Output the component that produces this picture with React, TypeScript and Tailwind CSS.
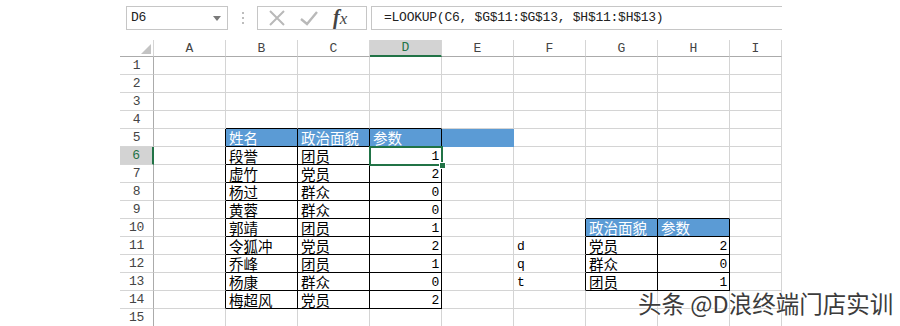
import React from "react";

const COLS = ["A", "B", "C", "D", "E", "F", "G", "H", "I"];
const ROWS = Array.from({ length: 15 }, (_, i) => i + 1);

type Cell = { t: string; k: "cjk" | "num" | "lat"; w?: boolean };

const DATA: Record<string, Cell> = {
  B5: { t: "姓名", k: "cjk", w: true },
  C5: { t: "政治面貌", k: "cjk", w: true },
  D5: { t: "参数", k: "cjk", w: true },
  G10: { t: "政治面貌", k: "cjk", w: true },
  H10: { t: "参数", k: "cjk", w: true },
  F11: { t: "d", k: "lat" },
  F12: { t: "q", k: "lat" },
  F13: { t: "t", k: "lat" },
  G11: { t: "党员", k: "cjk" },
  G12: { t: "群众", k: "cjk" },
  G13: { t: "团员", k: "cjk" },
  H11: { t: "2", k: "num" },
  H12: { t: "0", k: "num" },
  H13: { t: "1", k: "num" },
};

const T1: [string, string, string][] = [
  ["段誉", "团员", "1"],
  ["虚竹", "党员", "2"],
  ["杨过", "群众", "0"],
  ["黄蓉", "群众", "0"],
  ["郭靖", "团员", "1"],
  ["令狐冲", "党员", "2"],
  ["乔峰", "团员", "1"],
  ["杨康", "群众", "0"],
  ["梅超风", "党员", "2"],
];
T1.forEach(([a, b, c], i) => {
  const r = i + 6;
  DATA["B" + r] = { t: a, k: "cjk" };
  DATA["C" + r] = { t: b, k: "cjk" };
  DATA["D" + r] = { t: c, k: "num" };
});

function inTable(c: number, r: number) {
  if (c >= 1 && c <= 3 && r >= 5 && r <= 14) return true;
  if (c >= 6 && c <= 7 && r >= 10 && r <= 13) return true;
  return false;
}
function filled(c: number, r: number) {
  if (r === 5 && c >= 1 && c <= 4) return true;
  if (r === 10 && c >= 6 && c <= 7) return true;
  return false;
}

const CJK = "font-['Noto_Sans_CJK_SC',sans-serif]";
const MONO = "font-['Liberation_Mono','Noto_Sans_CJK_SC',monospace]";

function GridCell({ c, r }: { c: number; r: number }) {
  const key = COLS[c] + r;
  const d = DATA[key];
  const isFill = filled(c, r);
  const rightBlack = inTable(c, r) || inTable(c + 1, r);
  const bottomBlack = inTable(c, r) || inTable(c, r + 1);
  const rc = rightBlack ? "#000000" : isFill ? "#5b9bd5" : "#d4d4d4";
  const bc = bottomBlack ? "#000000" : isFill ? "#5b9bd5" : "#d4d4d4";
  const selected = key === "D6";
  return (
    <div
      className={`relative flex h-[18px] items-end border-r border-b ${
        isFill ? "bg-[#5b9bd5]" : "bg-white"
      } ${d && d.k === "num" ? "justify-end pr-[2px]" : "justify-start pl-[3px]"}`}
      style={{ borderRightColor: rc, borderBottomColor: bc }}
    >
      {d && (
        <span
          className={`whitespace-nowrap ${
            d.k === "cjk"
              ? `${CJK} text-[14.5px] leading-[16px]`
              : `${MONO} text-[13px] leading-[15px] tracking-[-0.4px]`
          } ${d.w ? "text-white" : "text-black"}`}
        >
          {d.t}
        </span>
      )}
      {selected && (
        <>
          <div className="pointer-events-none absolute left-[-1px] top-[-1px] z-10 h-[20px] w-[74px] border-2 border-[#217346]" />
          <div className="absolute left-[69px] top-[15px] z-20 h-[7px] w-[7px] border border-white bg-[#217346]" />
        </>
      )}
    </div>
  );
}

function XIcon() {
  return (
    <svg width="20" height="16" viewBox="0 0 20 16">
      <path d="M3 1 L17 15 M17 1 L3 15" stroke="#b9b9b9" strokeWidth="2" fill="none" />
    </svg>
  );
}
function CheckIcon() {
  return (
    <svg width="20" height="16" viewBox="0 0 20 16">
      <path d="M2 9 L8 14 L18 2" stroke="#b9b9b9" strokeWidth="2.4" fill="none" />
    </svg>
  );
}

export default function App() {
  return (
    <div className="relative h-[326px] w-[900px] overflow-hidden bg-white">
      <div className="relative ml-[120px] w-[662px]">
        {/* formula bar */}
        <div className="flex h-[40px] items-start pt-[6px]">
          <div className="ml-[6px] flex h-[24px] w-[102px] items-center justify-between border border-[#c6c6c6] pl-[4px] pr-[6px]">
            <span className={`${MONO} text-[13px] tracking-[-0.4px] text-[#222]`}>D6</span>
            <svg width="8" height="5" viewBox="0 0 8 5">
              <path d="M0 0 L8 0 L4 5 Z" fill="#7a7a7a" />
            </svg>
          </div>
          <div className="ml-[13px] flex h-[24px] w-[3px] flex-col items-center justify-center gap-[3px]">
            <div className="h-[2px] w-[2px] bg-[#bdbdbd]" />
            <div className="h-[2px] w-[2px] bg-[#bdbdbd]" />
            <div className="h-[2px] w-[2px] bg-[#bdbdbd]" />
          </div>
          <div className="ml-[13px] flex h-[24px] w-[110px] items-center border border-[#c6c6c6] pl-[9px]">
            <XIcon />
            <div className="ml-[12px]">
              <CheckIcon />
            </div>
            <span className="ml-[14px] font-['Liberation_Serif',serif] text-[20px] italic leading-[20px] text-[#444]">
              <span className="font-bold">f</span>
              <span className="text-[17px]">x</span>
            </span>
          </div>
          <div className="ml-[4px] flex h-[24px] flex-1 items-center border-y border-l border-[#c6c6c6] pl-[12px]">
            <span className={`${MONO} whitespace-nowrap text-[13px] tracking-[-0.25px] text-[#222]`}>
              =LOOKUP(C6, $G$11:$G$13, $H$11:$H$13)
            </span>
          </div>
        </div>

        {/* sheet */}
        <div className="grid grid-cols-[34px_repeat(8,72px)_52px]">
          <div className="relative h-[17px] border-r border-b border-r-[#d5d5d5] border-b-[#ababab]">
            <svg className="absolute right-[2px] bottom-[2px]" width="10" height="10" viewBox="0 0 10 10">
              <path d="M10 0 L10 10 L0 10 Z" fill="#c3c3c3" />
            </svg>
          </div>
          {COLS.map((c) => {
            const sel = c === "D";
            return (
              <div
                key={c}
                className={`flex h-[17px] items-center justify-center ${
                  sel
                    ? "border-b-2 border-r border-b-[#217346] border-r-[#d5d5d5] bg-[#d3d3d3] text-[#217346]"
                    : "border-r border-b border-r-[#d5d5d5] border-b-[#ababab] text-[#444]"
                } ${MONO} text-[13px] leading-[15px]`}
              >
                {c}
              </div>
            );
          })}
          {ROWS.map((r) => (
            <React.Fragment key={r}>
              <div
                className={`flex h-[18px] items-center justify-center ${
                  r === 6
                    ? "border-r-2 border-b border-r-[#217346] border-b-[#d5d5d5] bg-[#d3d3d3] text-[#217346]"
                    : "border-r border-b border-r-[#ababab] border-b-[#d5d5d5] text-[#444]"
                } ${MONO} text-[13px] leading-[15px] tracking-[-0.4px]`}
              >
                {r}
              </div>
              {COLS.map((_, c) => (
                <GridCell key={c} c={c} r={r} />
              ))}
            </React.Fragment>
          ))}
        </div>
      </div>

      {/* watermark */}
      <div
        className={`absolute left-[638px] top-[287px] z-30 whitespace-nowrap ${CJK} text-[23.5px] leading-[32px] text-[#3c3c3c] [text-shadow:0_0_2px_#fff,0_0_2px_#fff,0_0_3px_#fff]`}
      >
        头条 @D浪终端门店实训
      </div>
    </div>
  );
}
